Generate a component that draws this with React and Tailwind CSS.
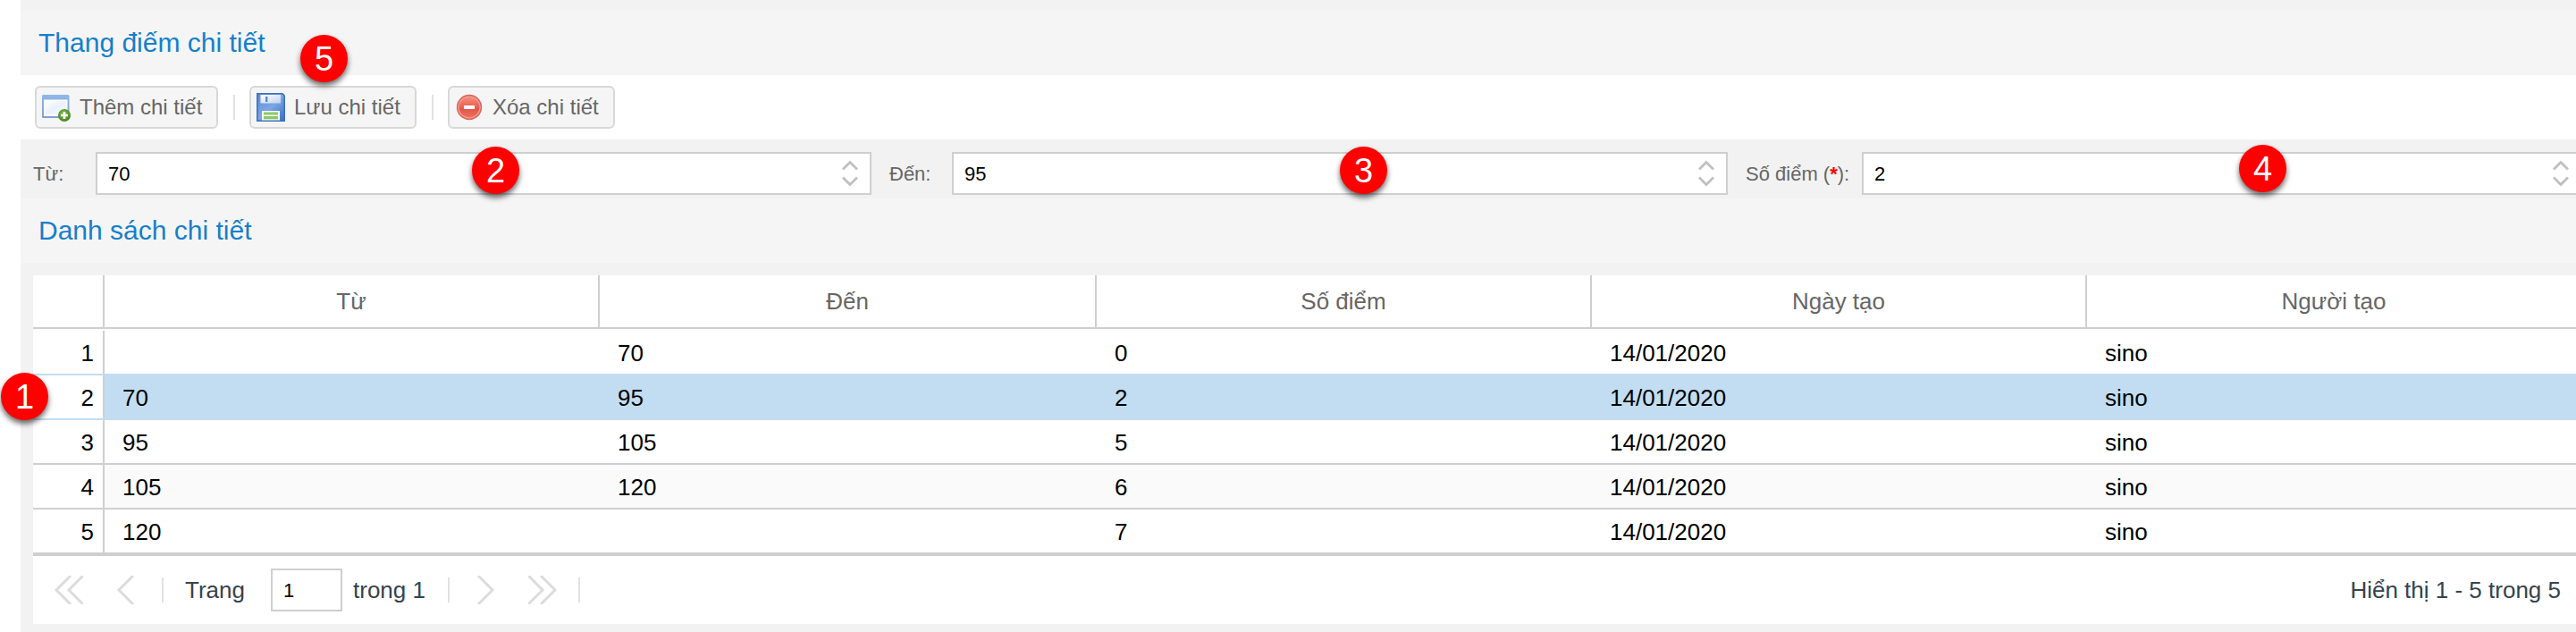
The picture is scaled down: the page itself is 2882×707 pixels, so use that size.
import React from "react";

const columns = ["Từ", "Đến", "Số điểm", "Ngày tạo", "Người tạo"];

const rows = [
  ["", "70", "0", "14/01/2020", "sino"],
  ["70", "95", "2", "14/01/2020", "sino"],
  ["95", "105", "5", "14/01/2020", "sino"],
  ["105", "120", "6", "14/01/2020", "sino"],
  ["120", "", "7", "14/01/2020", "sino"],
];

const gridCols = "grid grid-cols-[80px_554px_556px_554px_554px_554px]";

const rowLines = [
  "border-[#c2ddf2]",
  "border-[#c2ddf2]",
  "border-[#cfcfcf]",
  "border-[#cfcfcf]",
  "border-[#cfcfcf]",
];

function AddIcon() {
  return (
    <svg className="size-8 shrink-0" viewBox="0 0 32 32">
      <defs>
        <linearGradient id="winBar" x1="0" y1="0" x2="0" y2="1">
          <stop offset="0" stopColor="#8fb8ea" />
          <stop offset="1" stopColor="#7f9fd0" />
        </linearGradient>
        <linearGradient id="winBody" x1="0" y1="0" x2="1" y2="1">
          <stop offset="0" stopColor="#ffffff" />
          <stop offset="0.5" stopColor="#e9f1fb" />
          <stop offset="1" stopColor="#ffffff" />
        </linearGradient>
        <radialGradient id="plusBall" cx="0.45" cy="0.4" r="0.6">
          <stop offset="0" stopColor="#8cc152" />
          <stop offset="1" stopColor="#3f8420" />
        </radialGradient>
      </defs>
      <rect x="0" y="2" width="30.5" height="26" rx="1.5" fill="url(#winBar)" />
      <rect x="2" y="7.5" width="26.5" height="18.5" fill="#fff" />
      <rect x="3.5" y="9" width="23.5" height="15.5" fill="url(#winBody)" />
      <circle cx="25" cy="25" r="7" fill="url(#plusBall)" />
      <path d="M25 21v8M21 25h8" stroke="#fff" strokeWidth="2.6" />
    </svg>
  );
}

function SaveIcon() {
  return (
    <svg className="size-8 shrink-0" viewBox="0 0 32 32">
      <defs>
        <linearGradient id="disk" x1="0" y1="0" x2="1" y2="1">
          <stop offset="0" stopColor="#5b8fda" />
          <stop offset="0.5" stopColor="#7ba6e6" />
          <stop offset="1" stopColor="#3a6fc0" />
        </linearGradient>
        <linearGradient id="shutter" x1="0" y1="0" x2="1" y2="1">
          <stop offset="0" stopColor="#ffffff" />
          <stop offset="1" stopColor="#bfd2ee" />
        </linearGradient>
      </defs>
      <path d="M0.8 0.8H29l2.2 2.2v28.2H0.8z" fill="url(#disk)" stroke="#3d70bd" strokeWidth="1.6" />
      <path d="M4.5 2h22.5v9.5H4.5z" fill="url(#shutter)" />
      <path d="M10 4h2.4v6H10z" fill="#5b87cc" />
      <path d="M6 20h20v10.5H6z" fill="#f6fbf2" />
      <path d="M8 21.4h16v3.2H8zM8 26h16v3.2H8z" fill="#8cc86a" />
    </svg>
  );
}

function DeleteIcon() {
  return (
    <svg className="size-8 shrink-0" viewBox="0 0 32 32">
      <defs>
        <linearGradient id="stop" x1="0" y1="0" x2="0" y2="1">
          <stop offset="0" stopColor="#f5907e" />
          <stop offset="0.6" stopColor="#e4564a" />
          <stop offset="1" stopColor="#ee7263" />
        </linearGradient>
      </defs>
      <circle cx="16" cy="16" r="14.2" fill="#d9685a" />
      <circle cx="16" cy="16" r="12" fill="url(#stop)" stroke="#f4a99c" strokeWidth="1.1" />
      <rect x="10" y="14" width="12" height="4" fill="#fff" />
    </svg>
  );
}

function ToolButton({ icon, label, className }) {
  return (
    <button
      className={`flex h-12 items-center rounded-md border-2 border-[#d8d8d8] bg-[#f5f5f5] pl-1.5 text-[24px] text-[#666666] ${className}`}
    >
      {icon}
      <span className="ml-2.5 whitespace-nowrap">{label}</span>
    </button>
  );
}

function Separator({ className }) {
  return <span className={`h-7 w-0.5 shrink-0 bg-[#e1e1e1] ${className}`} />;
}

function Spinner() {
  return (
    <svg
      className="h-[30px] w-[18px] shrink-0"
      viewBox="0 0 18 30"
      fill="none"
      stroke="#c0c0c0"
      strokeWidth="2.8"
    >
      <path d="M1 10.5l8-8 8 8M1 19.5l8 8 8-8" />
    </svg>
  );
}

function NumberField({ value, className }) {
  return (
    <div
      className={`flex h-12 shrink-0 items-center justify-between border-2 border-[#cfcfcf] bg-white pl-3 text-[22px] text-black ${className}`}
    >
      <span className="pt-px">{value}</span>
      <Spinner />
    </div>
  );
}

function Badge({ n, className }) {
  return (
    <div
      className={`absolute flex size-[53px] items-center justify-center rounded-full bg-[#ff0000] text-[38px] leading-none text-white shadow-[0_4px_6px_rgba(0,0,0,0.6)] ${className}`}
    >
      {n}
    </div>
  );
}

function Chevrons({ d, className }) {
  return (
    <svg
      className={`size-8 shrink-0 ${className}`}
      viewBox="0 0 32 32"
      fill="none"
      stroke="#dcdcdc"
      strokeWidth="3"
    >
      <path d={d} />
    </svg>
  );
}

export default function App() {
  return (
    <div className="relative h-[707px] w-[2882px] overflow-hidden bg-white pl-[23px] font-['Liberation_Sans',Arial,sans-serif]">
      <div className="flex h-full flex-col bg-[#f2f2f2] pt-3">
        <h1 className="flex h-[72px] shrink-0 items-center bg-[#f5f5f5] pb-0.5 pl-5 text-[30px] text-[#157fcc]">
          Thang điếm chi tiết
        </h1>

        <div className="flex h-[72px] shrink-0 items-center bg-white pl-4">
          <ToolButton icon={<AddIcon />} label="Thêm chi tiết" className="w-[205px]" />
          <Separator className="mr-4 ml-[17px]" />
          <ToolButton icon={<SaveIcon />} label="Lưu chi tiết" className="w-[187px]" />
          <Separator className="mr-4 ml-[17px]" />
          <ToolButton icon={<DeleteIcon />} label="Xóa chi tiết" className="w-[187px]" />
        </div>

        <div className="flex h-[66px] shrink-0 items-start pt-3.5 pl-3.5 text-[22px] leading-[49px] text-[#666666]">
          <span className="w-[70px] shrink-0">Từ:</span>
          <NumberField value="70" className="w-[868px] pr-[13px]" />
          <span className="w-[90px] shrink-0 pl-5">Đến:</span>
          <NumberField value="95" className="w-[868px] pr-[13px]" />
          <span className="w-[150px] shrink-0 whitespace-nowrap pl-5">
            Số điểm (<b className="text-[#ff0000]">*</b>):
          </span>
          <NumberField value="2" className="w-[820px] pr-[27px]" />
        </div>

        <h2 className="flex h-[72px] shrink-0 items-center bg-[#f5f5f5] pb-0.5 pl-5 text-[30px] text-[#157fcc]">
          Danh sách chi tiết
        </h2>

        <div className="mt-3.5 ml-3.5 h-[390px] shrink-0 overflow-hidden bg-white text-[26px]">
          <div className={`${gridCols} h-[60px] border-b-2 border-[#cfcfcf] text-[#666666]`}>
            <div className="border-r-2 border-[#cfcfcf]" />
            {columns.map((c) => (
              <div
                key={c}
                className="flex items-center justify-center border-r-2 border-[#cfcfcf]"
              >
                {c}
              </div>
            ))}
          </div>

          <div className="border-b-2 border-[#cfcfcf] pt-0.5">
            {rows.map((row, i) => (
              <div key={i} className={`${gridCols} h-[50px] border-b-2 text-black ${rowLines[i]}`}>
                <div className="flex items-center justify-end border-r-2 border-[#cfcfcf] bg-white pt-0.5 pr-2.5">
                  {i + 1}
                </div>
                {row.map((cell, j) => (
                  <div
                    key={j}
                    className={`flex items-center pt-0.5 pl-5 ${i === 1 ? "bg-[#c2ddf2]" : i === 3 ? "bg-[#fafafa]" : "bg-white"}`}
                  >
                    {cell}
                  </div>
                ))}
              </div>
            ))}
          </div>

          <div className="flex h-[76px] items-center text-[#35434d]">
            <Chevrons className="ml-6" d="M18 0L2 16l16 16M32 0L16 16l16 16" />
            <Chevrons className="ml-9" d="M20 0L4 16l16 16" />
            <Separator className="ml-5" />
            <span className="ml-6 w-24">Trang</span>
            <span className="flex h-12 w-20 items-center border-2 border-[#cfcfcf] pl-3 text-[22px] text-black">
              1
            </span>
            <span className="ml-3 w-[106px] whitespace-nowrap">trong 1</span>
            <Separator />
            <Chevrons className="ml-6" d="M8 0l16 16L8 32" />
            <Chevrons className="ml-8" d="M0 0l16 16L0 32M14 0l16 16-16 16" />
            <Separator className="ml-6" />
            <span className="mr-[17px] ml-auto">Hiển thị 1 - 5 trong 5</span>
          </div>
        </div>
      </div>

      <Badge n="1" className="top-[417px] left-[1px]" />
      <Badge n="2" className="top-[164px] left-[528px]" />
      <Badge n="3" className="top-[164px] left-[1499px]" />
      <Badge n="4" className="top-[162px] left-[2505px]" />
      <Badge n="5" className="top-[39px] left-[336px]" />
    </div>
  );
}
